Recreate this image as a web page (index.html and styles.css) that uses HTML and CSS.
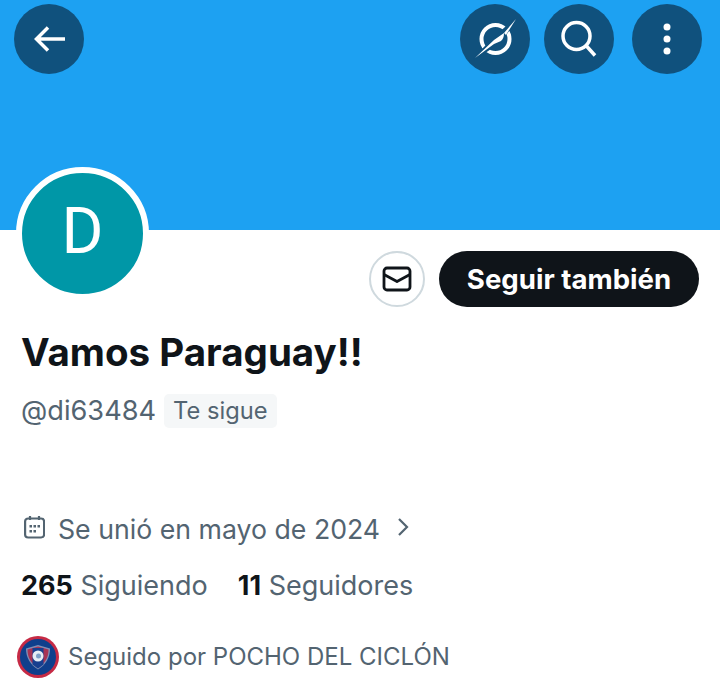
FILE: index.html
```html
<!DOCTYPE html>
<html lang="es">
<head>
  <meta charset="UTF-8">
  <meta name="viewport" content="width=device-width, initial-scale=1.0">
  <title>Vamos Paraguay!!</title>
  <link rel="stylesheet" href="styles.css">
</head>
<body>

<header class="banner">
  <button class="round-btn back-btn" type="button" aria-label="Volver">
    <svg width="34" height="34" viewBox="0 0 34 34" fill="none" stroke="#fff" stroke-width="3.500"><path d="M33 17H5M16 5.500 4.500 17 16 28.500"/></svg>
  </button>
  <button class="round-btn grok-btn" type="button" aria-label="Grok">
    <svg width="50" height="50" viewBox="0 0 50 50"><circle cx="25.500" cy="25" r="14" fill="none" stroke="#fff" stroke-width="4"/><path d="M4 45 26 23 46 5 30 27z" fill="#10517d" stroke="#10517d" stroke-width="3"/><path d="M5 44 24 26l10-7c0 4-1 6-3 8l-7 3z" fill="#fff"/><path d="M34 19 46 5 36 21z" fill="#fff"/></svg>
  </button>
  <button class="round-btn search-btn" type="button" aria-label="Buscar">
    <svg width="40" height="40" viewBox="0 0 40 40" fill="none" stroke="#fff" stroke-width="3.500"><circle cx="17.500" cy="17" r="13.500"/><path d="M27 26.500 36 36.500"/></svg>
  </button>
  <button class="round-btn more-btn" type="button" aria-label="Más">
    <svg width="10" height="34" viewBox="0 0 10 34" fill="#fff"><circle cx="5" cy="5" r="3.500"/><circle cx="5" cy="17" r="3.500"/><circle cx="5" cy="29" r="3.500"/></svg>
  </button>
</header>

<main class="profile">
  <div class="top-row">
    <div class="avatar"><span>D</span></div>
    <div class="actions">
      <button class="mail-btn" type="button" aria-label="Mensaje">
        <svg width="30" height="26" viewBox="0 0 30 26" fill="none" stroke="#0f1419" stroke-width="2.800" stroke-linejoin="round"><rect x="2" y="2" width="26" height="22" rx="3"/><path d="M2 8.500 15 15.500 28 8.500"/></svg>
      </button>
      <button class="follow-btn" type="button">Seguir también</button>
    </div>
  </div>

  <h1 class="name">Vamos Paraguay!!</h1>
  <div class="handle-row">
    <span class="handle">@di63484</span>
    <span class="follows-you">Te sigue</span>
  </div>

  <div class="joined">
    <svg class="calendar" width="24" height="24" viewBox="0 0 24 24" fill="none" stroke="#536471" stroke-width="2.200"><rect x="4.100" y="3.500" width="19" height="19" rx="3"/><path d="M9 1v4M18 1v4"/><g stroke="none" fill="#536471"><rect x="8.500" y="10" width="2.500" height="2.500"/><rect x="12.500" y="10" width="2.500" height="2.500"/><rect x="16.500" y="10" width="2.500" height="2.500"/><rect x="8.500" y="15" width="2.500" height="2.500"/><rect x="12.500" y="15" width="2.500" height="2.500"/></g></svg>
    <span>Se unió en mayo de 2024</span>
    <svg class="chevron" width="14" height="20" viewBox="0 0 14 20" fill="none" stroke="#536471" stroke-width="2.200"><path d="m3 2 8 8-8 8"/></svg>
  </div>

  <div class="counts">
    <span><b>265</b> Siguiendo</span>
    <span><b>11</b> Seguidores</span>
  </div>

  <div class="followed-by">
    <svg width="42" height="42" viewBox="0 0 42 42">
      <circle cx="21" cy="21" r="21" fill="#c62a45"/>
      <circle cx="21" cy="21" r="18" fill="#0f3f8c"/>
      <path d="M9 12.500 21 9l12 3.500c0 9-4 16-12 21-8-5-12-12-12-21z" fill="#7f8fb5"/>
      <path d="M10.500 13.500 21 10.500l10.500 3c0 8-3.500 14-10.500 18.500-7-4.500-10.500-10.500-10.500-18.500z" fill="#a83355"/>
      <path d="M15.500 12h11v16.500l-5.500 4-5.500-4z" fill="#173f8f"/>
      <circle cx="21" cy="20" r="5.500" fill="#e6edf5"/>
      <circle cx="21.500" cy="20" r="2.500" fill="#7fa0c8"/>
    </svg>
    <span>Seguido por POCHO DEL CICLÓN</span>
  </div>
</main>

</body>
</html>
```

FILE: styles.css
```css
* {
  box-sizing: border-box;
}
body {
  margin: 0;
  background-color: white;
  font-family: Inter, Arial, sans-serif;
  color: #536471;
}
.banner {
  height: 230px;
  background-color: #1da1f2;
  padding: 4px 18px 0 14px;
  display: flex;
  align-items: flex-start;
}
.round-btn {
  width: 70px;
  height: 70px;
  border: none;
  border-radius: 50%;
  background-color: #10517d;
  padding: 0;
  display: flex;
  align-items: center;
  justify-content: center;
}
.grok-btn {
  margin-left: auto;
}
.search-btn {
  margin-left: 14px;
}
.more-btn {
  margin-left: 18px;
}
.profile {
  padding: 0 21px;
}
.top-row {
  display: flex;
  justify-content: space-between;
  align-items: flex-start;
  height: 77px;
}
.avatar {
  width: 133px;
  height: 133px;
  margin: -63px 0 0 -5px;
  padding-bottom: 4px;
  border: 6px solid white;
  border-radius: 50%;
  background-color: #0097a7;
  color: white;
  font-family: Roboto, sans-serif;
  font-size: 64px;
  display: flex;
  align-items: center;
  justify-content: center;
}
.actions {
  display: flex;
  gap: 14px;
  margin-top: 21px;
}
.mail-btn {
  width: 56px;
  height: 56px;
  border: 2px solid #cfd9de;
  border-radius: 50%;
  background-color: white;
  padding: 0;
  display: flex;
  align-items: center;
  justify-content: center;
}
.follow-btn {
  width: 260px;
  height: 56px;
  border: none;
  border-radius: 28px;
  background-color: #0f1419;
  color: white;
  font-family: inherit;
  font-size: 27.600px;
  font-weight: 700;
}
.name {
  margin: 20px 0 0;
  color: #0f1419;
  font-size: 38.500px;
  line-height: 50px;
  font-weight: 700;
}
.handle-row {
  display: flex;
  align-items: center;
  gap: 8px;
  margin-top: 16px;
}
.handle {
  font-size: 27.200px;
  line-height: 36px;
}
.follows-you {
  background-color: #f5f7f8;
  border-radius: 5px;
  padding: 0 9px;
  font-size: 23.700px;
  line-height: 34px;
}
.joined {
  display: flex;
  align-items: center;
  gap: 13px;
  margin-top: 82px;
  font-size: 26.700px;
  line-height: 36px;
}
.joined .calendar {
  margin-bottom: 4px;
}
.joined .chevron {
  margin: 0 0 4px 3px;
}
.counts {
  display: flex;
  gap: 30px;
  margin-top: 21px;
  font-size: 27px;
  line-height: 36px;
}
.counts b {
  color: #0f1419;
}
.followed-by {
  display: flex;
  align-items: center;
  gap: 9px;
  margin: 32px 0 0 -4px;
  font-size: 24px;
  line-height: 42px;
}
```
